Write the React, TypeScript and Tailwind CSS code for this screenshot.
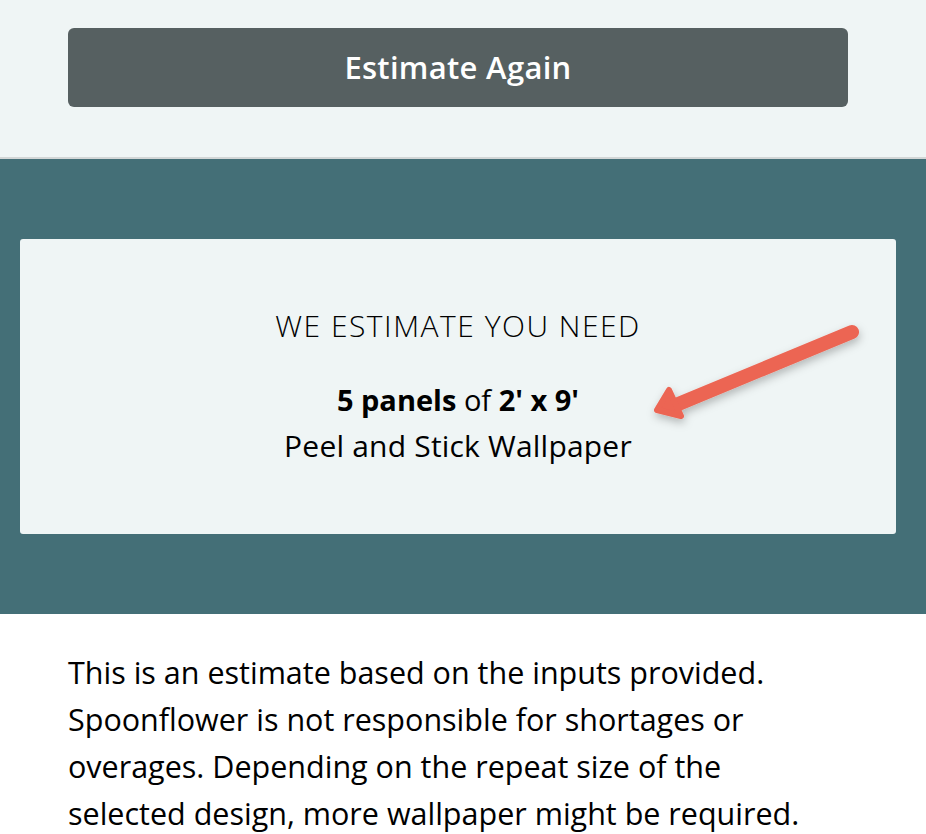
import React from 'react';

const App: React.FC = () => {
  return (
    <div className="min-h-[834px] w-full bg-white" style={{ fontFamily: '"Open Sans", "Noto Sans", sans-serif' }}>
      <section className="bg-[#eff5f5] pl-[68px] pr-[78px] pt-[28px] pb-[50px] border-b-2 border-[#d2d6d6]">
        <button className="w-full h-[79px] rounded-[6px] bg-[#566061] text-white text-[31px] font-semibold tracking-[0.3px]">
          Estimate Again
        </button>
      </section>

      <section className="bg-[#446f77] pl-[20px] pr-[30px] pt-[80px] pb-[80px]">
        <div className="relative bg-[#eff5f5] rounded-[3px] h-[295px] flex flex-col items-center pt-[69px] text-black">
          <p className="text-[30px] font-light tracking-[1.5px] leading-[36px]">WE ESTIMATE YOU NEED</p>
          <p className="mt-[36px] text-[29px] leading-[40px]">
            <span className="font-bold">5 panels</span> of <span className="font-bold">2' x 9'</span>
          </p>
          <p className="mt-[6px] text-[30px] leading-[40px] tracking-[0.2px]">Peel and Stick Wallpaper</p>

          <svg className="absolute left-[620px] top-[70px]" width="260" height="130" viewBox="0 0 260 130">
            <defs>
              <filter id="sh" x="-20%" y="-40%" width="140%" height="180%">
                <feDropShadow dx="1" dy="4" stdDeviation="4" floodColor="#000" floodOpacity="0.25" />
              </filter>
            </defs>
            <g filter="url(#sh)" fill="#ec6553" stroke="#ec6553" strokeLinecap="round" strokeLinejoin="round">
              <line x1="212" y1="23" x2="36" y2="96" strokeWidth="14" fill="none" />
              <path d="M17 101 L29 81 L41 107 Z" strokeWidth="6" />
            </g>
          </svg>
        </div>
      </section>

      <section className="bg-white pl-[68px] pr-[30px] pt-[35px]">
        <p className="text-[30.5px] leading-[47px] text-black">
          This is an estimate based on the inputs provided.
          <br />
          Spoonflower is not responsible for shortages or
          <br />
          overages. Depending on the repeat size of the
          <br />
          selected design, more wallpaper might be required.
        </p>
      </section>
    </div>
  );
};

export default App;
